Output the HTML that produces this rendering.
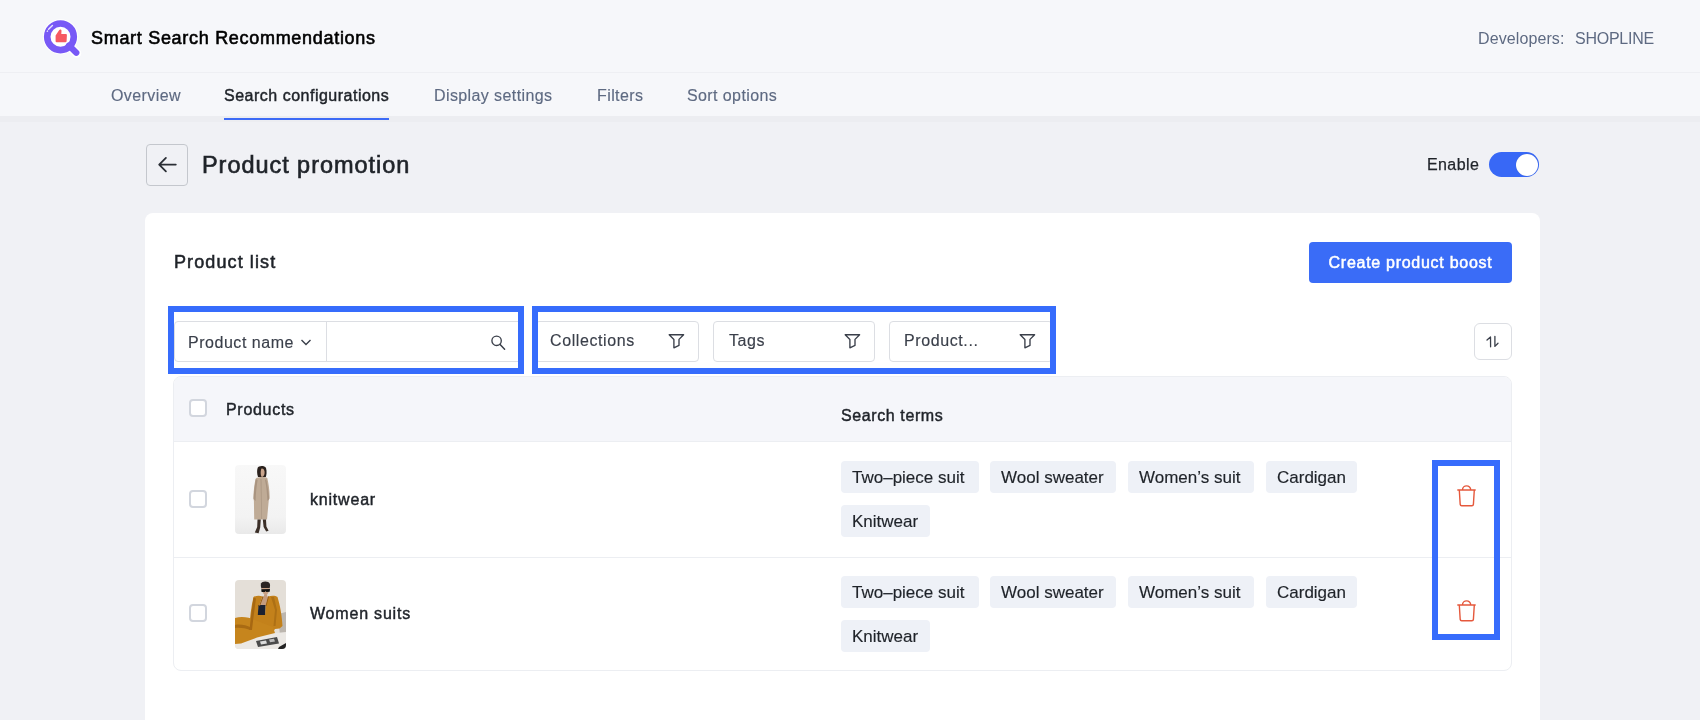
<!DOCTYPE html>
<html><head><meta charset="utf-8">
<style>
*{box-sizing:border-box;margin:0;padding:0}
html,body{width:1700px;height:720px;overflow:hidden}
body{position:relative;will-change:transform;background:#f0f1f5;font-family:"Liberation Sans",sans-serif;color:#1f2329}
.a{position:absolute;white-space:nowrap}
#hdr{left:0;top:0;width:1700px;height:73px;background:#f6f7fa;border-bottom:1px solid #eeeff3}
#nav{left:0;top:73px;width:1700px;height:43px;background:#f6f7fa}
#shadow{left:0;top:116px;width:1700px;height:6px;background:#ecedf1}
.title{left:91px;top:27px;font-size:18px;color:#000;line-height:22px;letter-spacing:0.7px;-webkit-text-stroke:0.6px #000}
.dev{left:1478px;top:29px;font-size:16px;color:#5e6a82;line-height:20px}
.navi{top:86px;font-size:16px;color:#5e6a82;line-height:20px;letter-spacing:0.4px;-webkit-text-stroke:0.15px #5e6a82}
.navi.on{color:#1f2329;-webkit-text-stroke:0.45px #1f2329;letter-spacing:0.5px}
.uline{left:224px;top:118px;width:165px;height:2px;background:#3d6bf6}
.back{left:146px;top:143.5px;width:42px;height:42px;border:1px solid #c4c7cd;border-radius:4px;background:#f0f1f5}
.h1{left:202px;top:151.2px;font-size:23.5px;-webkit-text-stroke:0.65px #1f2329;letter-spacing:0.95px;color:#1f2329;line-height:28px}
.enable{left:1427px;top:155px;font-size:16px;color:#1f2329;line-height:20px;-webkit-text-stroke:0.25px #1f2329;letter-spacing:0.4px}
.tog{left:1489px;top:152px;width:50px;height:25px;border-radius:13px;background:#3868f6}
.knob{left:1515.5px;top:153.5px;width:22px;height:22px;border-radius:50%;background:#fff;box-shadow:0 0 1px #2a52c9}
#card{left:145px;top:213px;width:1395px;height:600px;background:#fff;border-radius:8px}
.plist{left:174px;top:251px;font-size:18px;color:#1f2329;line-height:22px;-webkit-text-stroke:0.55px #1f2329;letter-spacing:1.1px}
.btn{left:1309px;top:242px;width:203px;height:41px;border-radius:4px;background:#3a6cf7;color:#fff;font-size:16px;-webkit-text-stroke:0.5px #fff;letter-spacing:0.72px;line-height:41px;text-align:center}
.inp{left:174px;top:321px;width:348px;height:41px;border:1px solid #dcdee3;border-radius:4px;background:#fff}
.div{left:326px;top:322px;width:1px;height:39px;background:#dcdee3}
.txt16{font-size:16px;color:#1f2329;line-height:20px}
.fbox{top:321px;width:162px;height:41px;border:1px solid #dcdee3;border-radius:4px;background:#fff}
.sort{left:1474px;top:323px;width:38px;height:37px;border:1px solid #dcdee3;border-radius:6px;background:#fff}
.hl{border:6px solid #366cfc}
#tbl{left:173px;top:376px;width:1339px;height:295px;border:1px solid #eceef2;border-radius:8px;overflow:hidden;background:#fff}
.thead{left:0;top:0;width:1339px;height:64px;background:#f5f6fa}
.rowline{left:0;width:1339px;height:1px;background:#eceef2}
.cb{width:18px;height:18px;border:2px solid #d2d6de;border-radius:4px;background:#fff}
.th{font-size:16px;color:#1f2329;line-height:20px;-webkit-text-stroke:0.45px #1f2329;letter-spacing:0.6px}
.tag{height:32px;border-radius:4px;background:#eef1f7;font-size:17px;color:#1f2329;-webkit-text-stroke:0.15px #1f2329;line-height:34px;padding:0 11px}
.pname{font-size:16px;color:#1f2329;line-height:20px;-webkit-text-stroke:0.45px #1f2329;letter-spacing:0.8px}
</style></head><body>
<div class="a" id="hdr"></div>
<div class="a" id="nav"></div>
<div class="a" id="shadow"></div>
<!-- logo -->
<svg class="a" style="left:40px;top:17px" width="44" height="42" viewBox="0 0 44 42">
  <line x1="30" y1="29.5" x2="36.8" y2="36.3" stroke="#fff" stroke-width="9" stroke-linecap="round"/>
  <circle cx="20.5" cy="19.8" r="17.6" fill="#fff"/>
  <line x1="29" y1="28.5" x2="36.3" y2="35.8" stroke="#7859f6" stroke-width="6.2" stroke-linecap="round"/>
  <circle cx="20.5" cy="19.8" r="13.3" fill="none" stroke="#7859f6" stroke-width="6.6"/>
  <path d="M7.2 14.4 L7.6 14" stroke="#fff" stroke-width="1.3" stroke-linecap="round" opacity="0.85"/>
  <path d="M8.6 12.2 L12.4 8.4" stroke="#fff" stroke-width="1.4" stroke-linecap="round" opacity="0.85"/>
  <path d="M15.6 18.6 L19.1 13.2 Q19.7 12.2 20.7 12.5 Q21.6 12.9 21.5 14 L21.3 17.1 L25.9 17.1 Q27 17.2 26.9 18.3 L26.6 24.2 Q26.5 25.2 25.5 25.2 L16.6 25.2 Q15.6 25.2 15.6 24.2 Z" fill="#f65a63"/>
</svg>
<div class="a title">Smart Search Recommendations</div>
<div class="a dev" style="letter-spacing:0.1px">Developers:</div><div class="a dev" style="left:1575px;letter-spacing:-0.25px">SHOPLINE</div>

<div class="a navi" style="left:111px">Overview</div>
<div class="a navi on" style="left:224px">Search configurations</div>
<div class="a navi" style="left:434px">Display settings</div>
<div class="a navi" style="left:597px">Filters</div>
<div class="a navi" style="left:687px">Sort options</div>
<div class="a uline"></div>

<div class="a back"></div>
<svg class="a" style="left:156px;top:155px" width="22" height="20" viewBox="0 0 22 20">
  <path d="M19.8 9.6 H3.4 M9.9 2.9 L3.2 9.6 L9.9 16.3" stroke="#2a2e35" stroke-width="1.8" fill="none" stroke-linecap="round" stroke-linejoin="round"/>
</svg>
<div class="a h1">Product promotion</div>
<div class="a enable">Enable</div>
<div class="a tog"></div>
<div class="a knob"></div>

<div class="a" id="card"></div>
<div class="a plist">Product list</div>
<div class="a btn">Create product boost</div>

<!-- search input group -->
<div class="a inp"></div>
<div class="a div"></div>
<div class="a txt16" style="left:188px;top:332.5px;color:#3a3f4a;letter-spacing:0.53px;-webkit-text-stroke:0.15px #3a3f4a">Product name</div>
<svg class="a" style="left:300px;top:337.3px" width="12" height="10" viewBox="0 0 12 10">
  <path d="M1.5 3 L6 7.5 L10.5 3" stroke="#3a3f4a" stroke-width="1.4" fill="none"/>
</svg>
<svg class="a" style="left:489px;top:334px" width="18" height="18" viewBox="0 0 18 18">
  <circle cx="7.6" cy="6.8" r="4.7" stroke="#3a3f4a" stroke-width="1.35" fill="none"/>
  <path d="M11.1 10.4 L15.6 15.2" stroke="#3a3f4a" stroke-width="1.5" stroke-linecap="round"/>
</svg>

<!-- filters -->
<div class="a fbox" style="left:535px;width:164px"></div>
<div class="a fbox" style="left:713px"></div>
<div class="a fbox" style="left:889px;width:164px"></div>
<div class="a txt16" style="left:550px;top:331px;color:#3a3f4a;letter-spacing:0.6px;-webkit-text-stroke:0.15px #3a3f4a">Collections</div>
<div class="a txt16" style="left:729px;top:331px;color:#3a3f4a;letter-spacing:0.6px;-webkit-text-stroke:0.15px #3a3f4a">Tags</div>
<div class="a txt16" style="left:904px;top:331px;color:#3a3f4a;letter-spacing:0.6px;-webkit-text-stroke:0.15px #3a3f4a">Product...</div>
<svg class="a" style="left:668px;top:333px" width="17" height="17" viewBox="0 0 17 17"><path d="M1.2 1.7 H15.6 L11 6.4 V12.4 L5.9 14.8 V6.4 Z" stroke="#3a3f4a" stroke-width="1.35" fill="none" stroke-linejoin="round"/></svg>
<svg class="a" style="left:844px;top:333px" width="17" height="17" viewBox="0 0 17 17"><path d="M1.2 1.7 H15.6 L11 6.4 V12.4 L5.9 14.8 V6.4 Z" stroke="#3a3f4a" stroke-width="1.35" fill="none" stroke-linejoin="round"/></svg>
<svg class="a" style="left:1019px;top:333px" width="17" height="17" viewBox="0 0 17 17"><path d="M1.2 1.7 H15.6 L11 6.4 V12.4 L5.9 14.8 V6.4 Z" stroke="#3a3f4a" stroke-width="1.35" fill="none" stroke-linejoin="round"/></svg>

<div class="a sort"></div>
<svg class="a" style="left:1484px;top:333px" width="16" height="16" viewBox="0 0 16 16">
  <path d="M6.6 13.8 L6.5 3.9 L3 7 M10.9 3.3 V13.4 L14 10.3" stroke="#3a3f4a" stroke-width="1.3" fill="none" stroke-linecap="round" stroke-linejoin="round"/>
</svg>

<!-- table -->
<div class="a" id="tbl">
  <div class="a thead"></div>
  <div class="a rowline" style="top:64px"></div>
  <div class="a rowline" style="top:180px"></div>
  <div class="a cb" style="left:15px;top:22px"></div>
  <div class="a th" style="left:52px;top:23px;letter-spacing:0.7px">Products</div>
  <div class="a th" style="left:667px;top:29px">Search terms</div>

  <div class="a cb" style="left:15px;top:113px"></div>
  <div class="a cb" style="left:15px;top:227px"></div>
  <div class="a pname" style="left:136px;top:112.5px">knitwear</div>
  <div class="a pname" style="left:136px;top:226.5px">Women suits</div>
</div>


<!-- product images -->
<svg class="a" style="left:235px;top:465px" width="51" height="69" viewBox="0 0 51 69">
  <defs><linearGradient id="g1" x1="0" y1="0" x2="0" y2="1"><stop offset="0" stop-color="#f8f8f8"/><stop offset="0.75" stop-color="#f3f3f3"/><stop offset="1" stop-color="#e9e9e9"/></linearGradient></defs>
  <rect width="51" height="69" rx="4" fill="url(#g1)"/>
  <path d="M22.6 3 C23.5 0.5 29.5 0.3 31 3 C32 6 31.5 10 30.8 12 L23 12 C22 9 21.8 5.5 22.6 3 Z" fill="#2a211d"/>
  <path d="M26.5 3.5 C28.8 3.5 29.8 5.5 29.6 8 C29.4 10.5 28 12 26.8 12 C25.5 11 25.2 6 26.5 3.5 Z" fill="#caa58c"/>
  <path d="M20.8 13.5 C22.5 11.8 30 11.5 32.3 13 C33.5 18 34.8 26 34.6 33 L33.8 35 L32 54.5 L19.2 54.5 L18.9 36 L18.4 33 C18.6 25 19.5 18 20.8 13.5 Z" fill="#bfab96"/>
  <path d="M20.8 14 C19.6 21 18.8 28 18.6 34 L20.6 36 C20.8 28 21.6 21 22.6 15 Z" fill="#a99480"/>
  <path d="M31.2 14 C32.6 21 33.8 28 34.2 34 L32.4 36 C32 28 31.4 21 30 15 Z" fill="#a99480"/>
  <path d="M25.5 14 L26.3 54 L27 54 L26.5 14 Z" fill="#ad9985"/>
  <path d="M22.5 54.5 L22.2 62 L19.8 67.5 L23.6 68.2 L25.2 62.5 L25.8 54.5 Z" fill="#3b2f28"/>
  <path d="M27.8 54.5 L28.6 62 L31.2 66.5 L33.6 65.8 L31.4 61.5 L31 54.5 Z" fill="#3b2f28"/>
</svg>
<svg class="a" style="left:235px;top:580px" width="51" height="69" viewBox="0 0 51 69">
  <defs><clipPath id="c2"><rect width="51" height="69" rx="4"/></clipPath></defs>
  <g clip-path="url(#c2)">
  <rect width="51" height="69" fill="#e4dfd8"/>
  <path d="M43 34 L51 32 L51 56 L45 56 Z" fill="#bcb6af"/>
  <path d="M0 57 L51 52 L51 69 L0 69 Z" fill="#ebe8e4"/>
  <path d="M26 3.5 C27 0.8 33.8 0.8 34.8 3.8 C35.3 5.5 35 7.5 34.5 8.5 L26.5 8.5 C25.8 7 25.6 5 26 3.5 Z" fill="#2b2421"/>
  <path d="M26.8 8 C27 12.5 29 15 30.6 15 C32.4 15 34.2 12.5 34.3 8 Z" fill="#c9a184"/>
  <path d="M26.2 9.2 L35 9 L34.7 11.8 L31.3 12 L30.7 10.8 L30.1 12 L26.6 12 Z" fill="#131313"/>
  <path d="M29 14.5 L32.2 14.5 L32.2 17.5 L29 17.5 Z" fill="#c49c80"/>
  <path d="M18.5 17 C21.5 15.5 25 15.5 27.5 16.5 L24 26 L23 35 L30 35 L30.5 26 L33 16.5 C36.5 15.5 40.5 15.5 42.5 17 C45 25 47 36 47.5 46 L44.5 48.5 L40 49 L38 52 L20 56 L14 50 C15 38 16 27 18.5 17 Z" fill="#c3811b"/>
  <path d="M27.3 16.5 L33.2 16.5 L30.6 26.5 L23.8 26.5 Z" fill="#c59c7f"/>
  <path d="M23.5 25 L30.5 25 L30 35 L22.8 35 Z" fill="#1c2130"/>
  <path d="M0 38 C6 36 14 37 20 40 L30 44 L38 47 L40 53 L22 57.5 L6 63.5 L0 64 Z" fill="#c6851d"/>
  <path d="M0 45 C5 44 11 45 16 47.5 L15 50 C10 48 5 47.5 0 48 Z" fill="#a96b13"/>
  <path d="M18.5 17.5 C17 28 15.5 40 14.5 50 L17 50 C18 40 19.8 28 21 18.5 Z" fill="#a76812"/>
  <path d="M36 17 L40 30 L38.5 46 L40.5 46 L42 30 L39 17 Z" fill="#ad7015"/>
  <path d="M27.5 16.5 L24 26 L25 26 L28.6 16.5 Z M33 16.5 L30.5 26 L31.5 26 L34 16.5 Z" fill="#9c5f0f"/>
  <path d="M21 61 L42 57 L44 63.5 L23 67 Z" fill="#4b4b4b"/>
  <path d="M25 61.5 L31 60.5 L32 63.5 L26 64.5 Z" fill="#dcdcdc"/>
  <path d="M34 59.5 L39 58.7 L40 61.5 L35 62.3 Z" fill="#bcbcbc"/>
  <path d="M44 67 L51 63 L51 69 L43 69 Z" fill="#232323"/>
  </g>
</svg>
<!-- tags row1 -->
<div class="a tag" style="left:841px;top:461px;width:138px">Two–piece suit</div>
<div class="a tag" style="left:990px;top:461px;width:126px">Wool sweater</div>
<div class="a tag" style="left:1128px;top:461px;width:126px">Women’s suit</div>
<div class="a tag" style="left:1266px;top:461px;width:91px">Cardigan</div>
<div class="a tag" style="left:841px;top:505px;width:89px">Knitwear</div>
<!-- tags row2 -->
<div class="a tag" style="left:841px;top:575.5px;width:138px">Two–piece suit</div>
<div class="a tag" style="left:990px;top:575.5px;width:126px">Wool sweater</div>
<div class="a tag" style="left:1128px;top:575.5px;width:126px">Women’s suit</div>
<div class="a tag" style="left:1266px;top:575.5px;width:91px">Cardigan</div>
<div class="a tag" style="left:841px;top:620px;width:89px">Knitwear</div>

<!-- trash -->
<svg class="a" style="left:1456px;top:484.8px" width="22" height="23" viewBox="0 0 22 23">
  <path d="M1.3 5 H19.7 M6.5 5 A4.1 4.1 0 0 1 14.7 5 M3.3 5 L4.2 19.4 Q4.3 20.8 5.7 20.8 H15.9 Q17.3 20.8 17.4 19.4 L18.3 5" stroke="#e5583c" stroke-width="1.4" fill="none" stroke-linejoin="round"/>
</svg>
<svg class="a" style="left:1456px;top:599.8px" width="22" height="23" viewBox="0 0 22 23">
  <path d="M1.3 5 H19.7 M6.5 5 A4.1 4.1 0 0 1 14.7 5 M3.3 5 L4.2 19.4 Q4.3 20.8 5.7 20.8 H15.9 Q17.3 20.8 17.4 19.4 L18.3 5" stroke="#e5583c" stroke-width="1.4" fill="none" stroke-linejoin="round"/>
</svg>

<!-- highlight boxes -->
<div class="a hl" style="left:168px;top:306px;width:356px;height:68px"></div>
<div class="a hl" style="left:532px;top:306px;width:524px;height:68px"></div>
<div class="a hl" style="left:1432px;top:460px;width:68px;height:180px"></div>
</body></html>
